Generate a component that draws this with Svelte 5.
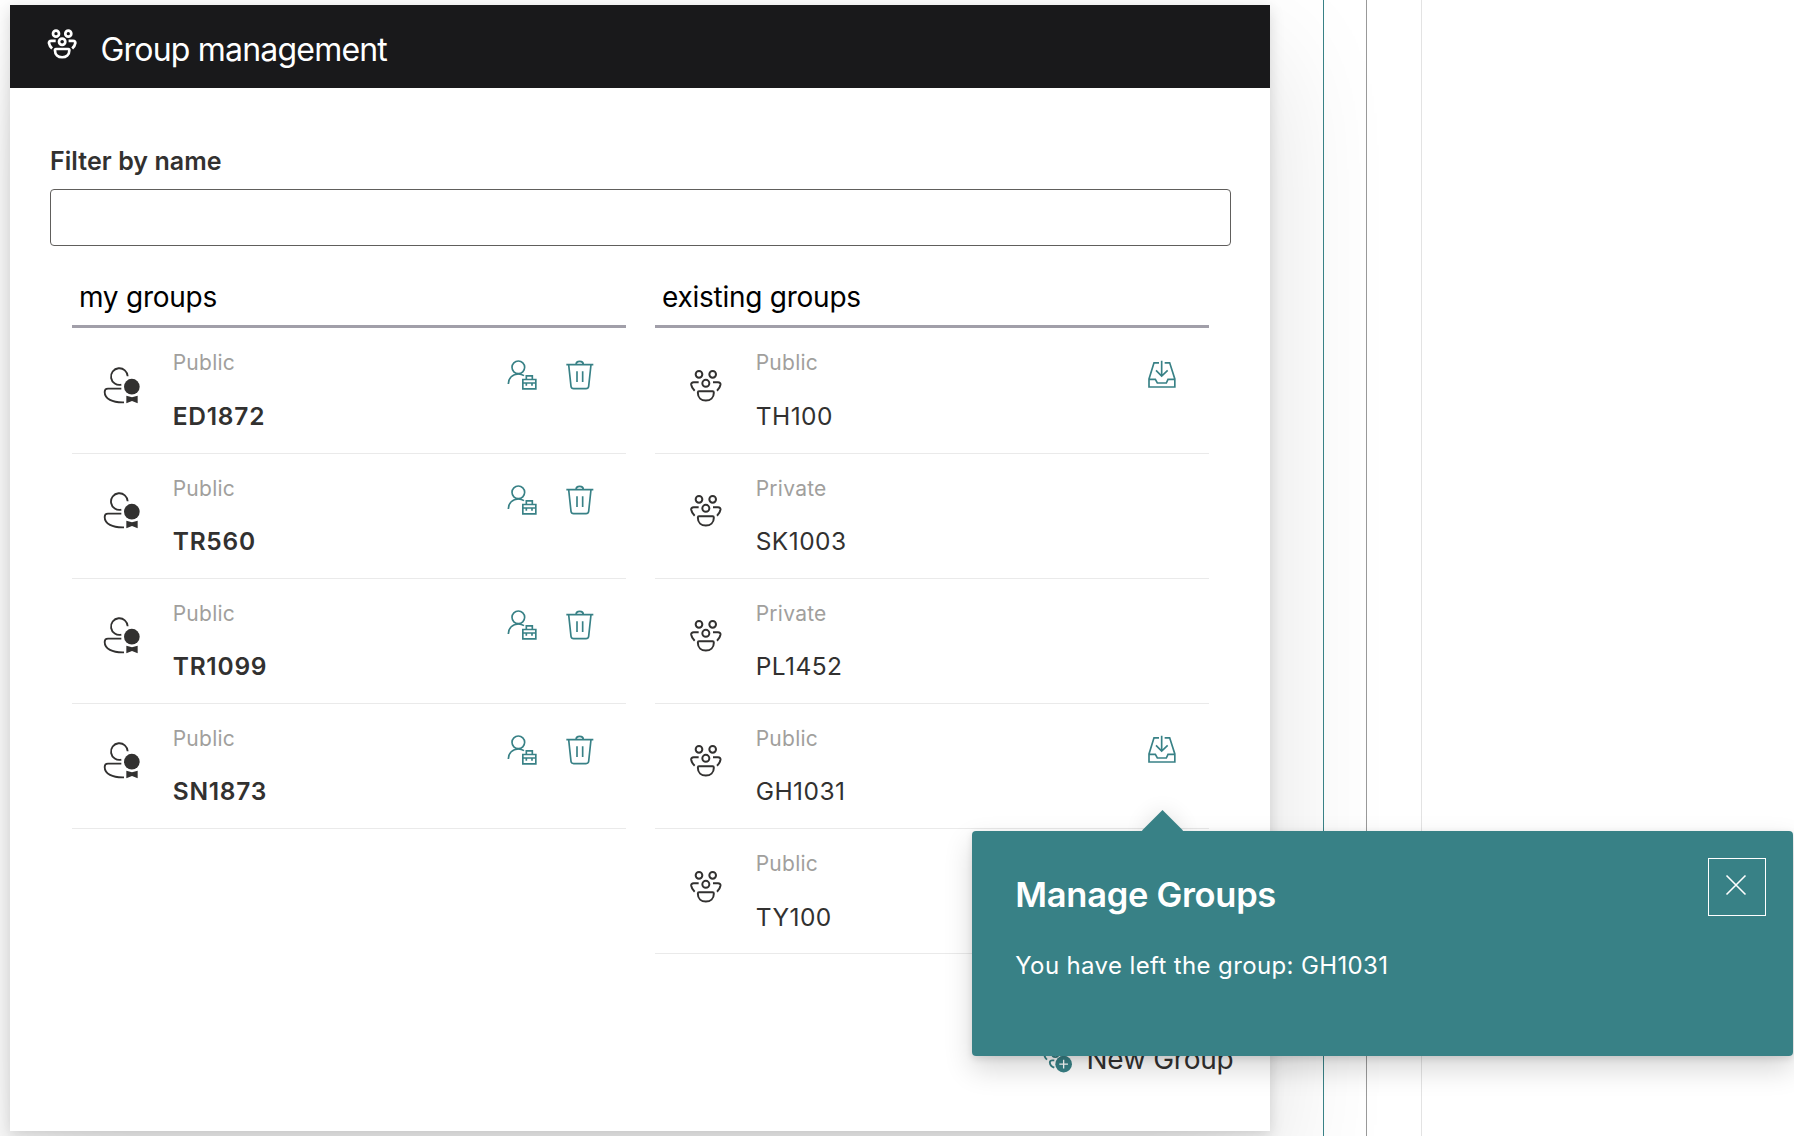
<script>
  const myGroups = ['ED1872', 'TR560', 'TR1099', 'SN1873'];
  const existingGroups = [
    { name: 'TH100', kind: 'Public', join: true },
    { name: 'SK1003', kind: 'Private', join: false },
    { name: 'PL1452', kind: 'Private', join: false },
    { name: 'GH1031', kind: 'Public', join: true },
    { name: 'TY100', kind: 'Public', join: false }
  ];
  let filter = $state('');
</script>

{#snippet people()}
  <svg class="people" viewBox="0 0 105 105">
    <circle cx="30" cy="19" r="10" />
    <circle cx="71" cy="19" r="10" />
    <circle cx="50.5" cy="46" r="10.5" />
    <path d="M29 43H14Q6 43 6.500 50Q8 60 17 68M72 43H87Q95 43 94.500 50Q93 60 84 68" />
    <path d="M30 70H71Q74.500 70 74.500 74C74.500 89 64 97.500 50.500 97.500C37 97.500 26.500 89 26.500 74Q26.500 70 30 70Z" />
  </svg>
{/snippet}

{#snippet owner()}
  <svg class="owner" viewBox="130 290 114 114">
    <path d="M204 321A25 25 0 1 0 185 346" />
    <path d="M185 358H145Q135 358 135 368C135 389 158 400 193 399" />
    <circle class="solid" cx="216.500" cy="352" r="23.500" />
    <path class="solid" d="M200 379L217 384L234 379V402L217 395L200 402Z" />
  </svg>
{/snippet}

{#snippet manage()}
  <svg class="manage" viewBox="80 86 92 92">
    <circle cx="114" cy="111" r="19" />
    <path d="M84 161C84 143 97 131 114 131Q124 131 131 136" />
    <path d="M127.500 147.500H166.500V175.500H127.500ZM138 147V136.500H156V147M127 158H167M138 158V166M155 158V166" />
  </svg>
{/snippet}

{#snippet trash()}
  <svg class="trash" viewBox="254 86 90 92">
    <path d="M258 103H339M287 103Q287 93 298 93Q309 93 309 103M265 103L272 168Q273 175 280 175H317Q324 175 325 168L332 103M290 123V155M307 123V155" />
  </svg>
{/snippet}

{#snippet inbox()}
  <svg class="inbox" viewBox="140 86 90 92">
    <path d="M176 97.500H161L146 146V170H223.500V146L208 97.500H193M146 147H165L171 158H198L203 147H223M184 91V137M167 120L184 137L202 120" />
  </svg>
{/snippet}

<div class="page">
  <section class="panel">
    <header>
      {@render people()}
      <h1>Group management</h1>
    </header>
    <label for="filter">Filter by name</label>
    <input id="filter" type="text" bind:value={filter} />
    <div class="columns">
      <div class="column mine">
        <h2>my groups</h2>
        {#each myGroups as name}
          <div class="row">
            <div class="avatar">{@render owner()}</div>
            <div class="text">
              <span class="kind">Public</span>
              <span class="name">{name}</span>
            </div>
            <div class="actions">{@render manage()}{@render trash()}</div>
          </div>
        {/each}
      </div>
      <div class="column">
        <h2>existing groups</h2>
        {#each existingGroups as g}
          <div class="row">
            <div class="avatar">{@render people()}</div>
            <div class="text">
              <span class="kind">{g.kind}</span>
              <span class="name">{g.name}</span>
            </div>
            {#if g.join}
              <div class="actions">{@render inbox()}</div>
            {/if}
          </div>
        {/each}
      </div>
    </div>
    <div class="footer">
      <svg class="add" viewBox="275 770 100 110">
        <circle cx="301" cy="782" r="9.500" />
        <circle cx="337" cy="782" r="9.500" />
        <circle cx="318" cy="821" r="9.500" />
        <path d="M297 808H290Q284 808 284 815Q284 830 293 838M315 840H309Q302 840 301.500 846Q302 857 315 862" />
        <circle class="solid" cx="343" cy="851.500" r="25" />
        <path class="plus" d="M330 851.500H356M343 838.500V864.500" />
      </svg>
      <span>New Group</span>
    </div>
  </section>
  <div class="rail teal"></div>
  <div class="rail gray"></div>
  <div class="rail light"></div>

  <div class="callout">
    <div class="beak"></div>
    <div class="body">
      <div class="copy">
        <h3>Manage Groups</h3>
        <p>You have left the group: GH1031</p>
      </div>
      <button aria-label="Close">
        <svg viewBox="0 0 20 20"><path d="M0.500 0.500L19.500 19.500M19.500 0.500L0.500 19.500" /></svg>
      </button>
    </div>
  </div>
</div>

<style>
  :global(body) {
    margin: 0;
    background: #fff;
    overflow: hidden;
  }
  .page {
    position: relative;
    display: flex;
    box-sizing: border-box;
    width: 1794px;
    height: 1136px;
    padding-left: 10px;
    overflow: hidden;
    font-family: Inter, "Liberation Sans", sans-serif;
    color: #323130;
  }
  h1, h2, h3, p { margin: 0; font-weight: 400; white-space: nowrap; }
  svg { display: block; flex: none; fill: none; stroke: currentColor; stroke-width: 5.5; overflow: visible; }
  .solid { fill: currentColor; stroke: none; }

  .panel {
    display: flex;
    flex-direction: column;
    flex: none;
    width: 1260px;
    height: 1126px;
    margin-top: 5px;
    background: #fff;
    box-shadow: 0 51px 115px rgba(0, 0, 0, 0.12), 0 5px 14.4px rgba(0, 0, 0, 0.14);
  }
  header {
    display: flex;
    height: 83px;
    background: #19191b;
    color: #fff;
  }
  header .people { width: 31.5px; height: 31.5px; margin: 23px 0 0 37px; stroke-width: 9; }
  h1 { margin-left: 22px; font-size: 32px; line-height: 89px; letter-spacing: -0.8px; }
  label {
    margin: 58px 0 0 40px;
    font-size: 25px;
    font-weight: 600;
    line-height: 30px;
    letter-spacing: 0.06px;
  }
  input {
    box-sizing: border-box;
    width: 1181px;
    height: 57px;
    margin: 13px 0 0 40px;
    padding: 0 14px;
    border: 1px solid #605e5c;
    border-radius: 4px;
    outline: none;
    font: 24px Inter, sans-serif;
  }
  .columns { display: flex; gap: 29px; margin: 26px 0 0 62px; }
  .column { width: 554px; }
  h2 {
    height: 53px;
    padding-left: 7px;
    border-bottom: 3px solid #a19fa9;
    color: #000;
    font-size: 28px;
    line-height: 50px;
    letter-spacing: -0.25px;
  }
  .row {
    display: flex;
    box-sizing: border-box;
    height: 125px;
    border-bottom: 1px solid #eaeaea;
  }
  h2 + .row { height: 126px; }
  .avatar { width: 101px; flex: none; }
  .avatar .people { width: 35px; height: 35px; margin: 39.300px 0 0 33.500px; stroke-width: 6; }
  .owner { width: 38px; height: 38px; margin: 37.300px 0 0 31.300px; }
  .text { display: flex; flex-direction: column; padding-top: 20px; margin-left: -0.300px; }
  .kind { font-size: 21px; line-height: 30px; letter-spacing: 0.250px; color: #a19f9d; }
  .name { margin-top: 22px; font-size: 24.500px; line-height: 30px; letter-spacing: 0.450px; }
  .mine .name { font-weight: 600; letter-spacing: 0.750px; }
  .actions {
    display: flex;
    gap: 27.300px;
    margin: 29.700px 32.300px 0 auto;
    color: #388186;
  }
  .mine .actions { margin-right: 31.300px; }
  .actions svg { width: 30px; height: 30.670px; stroke-width: 5; }
  .actions .manage { width: 30.670px; }
  /* The first and fifth rows sit one pixel lower than the others. */
  h2 + .row .avatar,
  .row:nth-child(6) .avatar,
  h2 + .row .actions { padding-top: 1px; }
  h2 + .row .name,
  .row:nth-child(6) .name { margin-top: 23px; }

  .footer { display: flex; margin: 78px 0 0 1031.200px; }
  .add { width: 33.300px; height: 36.700px; margin-top: 4.500px; color: #388186; }
  .plus { stroke: #fff; stroke-width: 4; }
  .footer span { margin-left: 12px; font-size: 28px; line-height: 54px; letter-spacing: -0.250px; white-space: nowrap; }

  .rail { box-sizing: border-box; flex: none; border-left: 1px solid; }
  .teal { width: 43px; margin-left: 53px; border-color: #388186; }
  .gray { width: 55px; border-color: #999; }
  .light { width: 300px; border-color: #e3e3e3; }

  .callout {
    position: absolute;
    left: 972px;
    top: 831px;
    width: 821px;
    height: 225px;
    border-radius: 4px;
    color: #fff;
    box-shadow: 0 12.800px 28.800px rgba(0, 0, 0, 0.16), 0 2.400px 7.200px rgba(0, 0, 0, 0.11);
  }
  .beak {
    position: absolute;
    left: 176px;
    top: -15px;
    width: 29px;
    height: 29px;
    background: #388186;
    transform: rotate(45deg);
    box-shadow: 0 0 22px rgba(0, 0, 0, 0.12);
  }
  .body {
    position: relative;
    display: flex;
    justify-content: space-between;
    box-sizing: border-box;
    height: 100%;
    padding: 27px 27px 0 43.300px;
    border-radius: 4px;
    background: #388186;
  }
  .copy { padding-top: 16px; }
  h3 { font-size: 34.500px; font-weight: 600; line-height: 42px; letter-spacing: -0.300px; }
  p { margin-top: 35px; font-size: 24px; line-height: 30px; letter-spacing: 0.370px; }
  button {
    display: flex;
    box-sizing: border-box;
    width: 58px;
    height: 58px;
    padding: 16px 0 0 17px;
    border: 1px solid #fff;
    background: none;
    color: #fff;
  }
  button svg { width: 20px; height: 20px; stroke-width: 1.600; }
</style>
